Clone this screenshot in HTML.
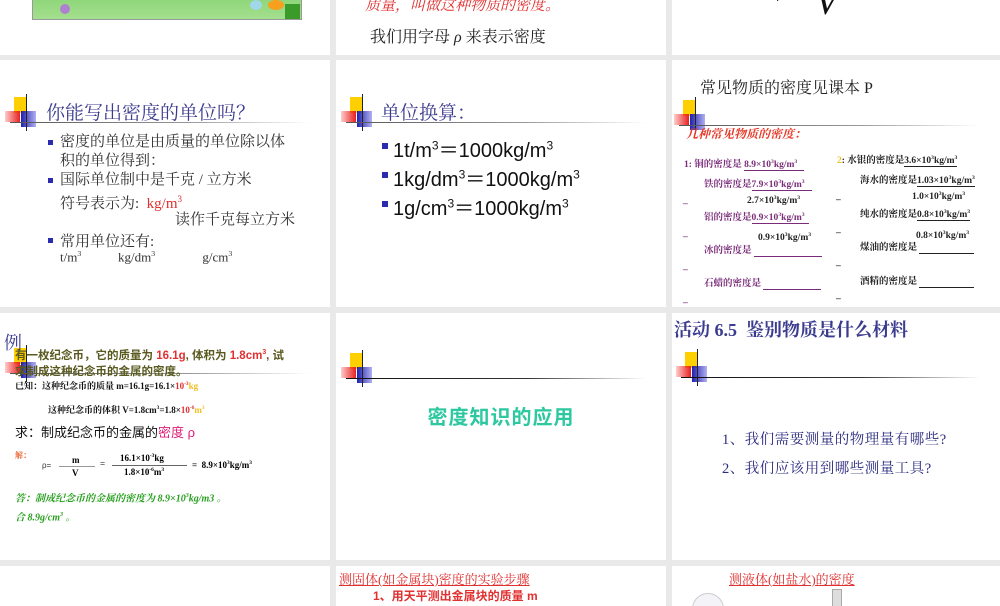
<!DOCTYPE html>
<html><head><meta charset="utf-8"><style>
body{margin:0;width:1000px;height:600px;background:#e9e9e9;position:relative;overflow:hidden;font-family:"Liberation Serif","Noto Serif CJK SC",serif}
.p{position:absolute;background:#fff;overflow:hidden}
.a{position:absolute;white-space:nowrap}
.ic{position:absolute;width:320px;height:40px}
.ic i{position:absolute;display:block}
.y{left:9px;top:0;width:12px;height:16px;background:#ffd000}
.r{left:0;top:14px;width:15px;height:11px;background:linear-gradient(90deg,rgba(255,90,90,.3),#e82020)}
.b{left:16px;top:14px;width:15px;height:16px;background:linear-gradient(90deg,#2020b0,rgba(60,60,220,.4))}
.v{left:21px;top:-3px;width:1px;height:37px;background:#222}
.h{left:5px;top:25px;width:300px;height:1px;background:linear-gradient(90deg,#555,#999 60%,rgba(200,200,200,0))}
.hd .h{background:linear-gradient(90deg,#111,#333 60%,rgba(200,200,200,0))}
.s{font-family:"Liberation Sans","Noto Sans CJK SC",sans-serif}
.pu{color:#7a2c7a;font-weight:bold;font-size:9.5px}
.bl{position:absolute;width:5px;height:5px;background:#2b2bb0}
sup{font-size:60%}
</style></head><body>
<!-- row1 -->
<div class="p" style="left:0;top:0;width:330px;height:55px">
<div class="a" style="left:32px;top:0;width:268px;height:19px;background:linear-gradient(180deg,#8fd67a,#a4df8e);border:1px solid #999;border-top:none"></div>
<div class="a" style="left:60px;top:4px;width:10px;height:10px;border-radius:50%;background:#b080d0"></div>
<div class="a" style="left:250px;top:0;width:12px;height:10px;border-radius:50%;background:#9fd8e8"></div>
<div class="a" style="left:268px;top:0;width:16px;height:10px;border-radius:50%;background:#f7a020"></div>
<div class="a" style="left:285px;top:4px;width:15px;height:15px;background:#3a9a2a"></div>
</div>
<div class="p" style="left:336px;top:0;width:330px;height:55px">
<div class="a" style="left:29px;top:-6px;font-size:15px;color:#e03030;font-style:italic">质量，叫做这种物质的密度。</div>
<div class="a" style="left:34px;top:24px;font-size:16px;color:#222">我们用字母 <i>ρ</i> 来表示密度</div>
</div>
<div class="p" style="left:672px;top:0;width:328px;height:55px">
<div class="a" style="left:143px;top:-20px;font-size:38px;font-style:italic;color:#111">V</div>
<div class="a" style="left:104px;top:-4px;font-size:10px">·</div>
</div>
<!-- row2 col1 -->
<div class="p" style="left:0;top:60px;width:330px;height:247px">
<div class="ic" style="left:5px;top:37px"><i class="y"></i><i class="r"></i><i class="b"></i><i class="v"></i><i class="h"></i></div>
<div class="a" style="left:46px;top:38px;font-size:19px;color:#3b3b8f">你能写出密度的单位吗？</div>
<div class="bl" style="left:48px;top:80px"></div>
<div class="a" style="left:60px;top:73px;font-size:15px;color:#333;line-height:19px">密度的单位是由质量的单位除以体<br>积的单位得到：</div>
<div class="bl" style="left:48px;top:118px"></div>
<div class="a" style="left:60px;top:111px;font-size:15px;color:#333;line-height:19px">国际单位制中是千克 / 立方米<br>符号表示为:&nbsp; <span style="color:#e03030">kg/m<sup>3</sup></span></div>
<div class="a" style="left:175px;top:148px;font-size:15px;color:#333">读作千克每立方米</div>
<div class="bl" style="left:48px;top:178px"></div>
<div class="a" style="left:60px;top:170px;font-size:15px;color:#333">常用单位还有:</div>
<div class="a" style="left:60px;top:189px;font-size:13px;color:#333;word-spacing:2px">t/m<sup>3</sup>&nbsp;&nbsp;&nbsp;&nbsp;&nbsp;&nbsp; kg/dm<sup>3</sup>&nbsp;&nbsp;&nbsp;&nbsp;&nbsp;&nbsp;&nbsp;&nbsp; g/cm<sup>3</sup></div>
</div>
<!-- row2 col2 -->
<div class="p" style="left:336px;top:60px;width:330px;height:247px">
<div class="ic" style="left:5px;top:37px"><i class="y"></i><i class="r"></i><i class="b"></i><i class="v"></i><i class="h"></i></div>
<div class="a" style="left:45px;top:38px;font-size:19px;color:#3b3b8f">单位换算：</div>
<div class="bl" style="left:46px;top:83px;width:6px;height:6px"></div>
<div class="a s" style="left:57px;top:74px;font-size:20px;color:#111">1t/m<sup>3</sup>＝1000kg/m<sup>3</sup></div>
<div class="bl" style="left:46px;top:112px;width:6px;height:6px"></div>
<div class="a s" style="left:57px;top:103px;font-size:20px;color:#111">1kg/dm<sup>3</sup>＝1000kg/m<sup>3</sup></div>
<div class="bl" style="left:46px;top:141px;width:6px;height:6px"></div>
<div class="a s" style="left:57px;top:132px;font-size:20px;color:#111">1g/cm<sup>3</sup>＝1000kg/m<sup>3</sup></div>
</div>
<!-- row2 col3 -->
<div class="p" style="left:672px;top:60px;width:328px;height:247px">
<div class="a" style="left:28px;top:15px;font-size:16px;color:#222">常见物质的密度见课本 P</div>
<div class="ic" style="left:2px;top:40px"><i class="y"></i><i class="r"></i><i class="b"></i><i class="v"></i><i class="h"></i></div>
<div class="a" style="left:14px;top:65px;font-size:12px;color:#e83a2a;font-style:italic;font-weight:bold">几种常见物质的密度：</div>
<div class="a pu" style="left:12px;top:96px">1: 铜的密度是 <span style="border-bottom:1px solid #7a2c7a">8.9×10<sup>3</sup>kg/m<sup>3</sup>&nbsp;&nbsp;&nbsp;</span></div>
<div class="a pu" style="left:32px;top:116px">铁的密度是<span style="border-bottom:1px solid #7a2c7a">7.9×10<sup>3</sup>kg/m<sup>3</sup>&nbsp;&nbsp;&nbsp;</span></div>
<div class="a pu" style="left:75px;top:135px;color:#222">2.7×10<sup>3</sup>kg/m<sup>3</sup></div>
<div class="a pu" style="left:32px;top:149px">铝的密度是<span style="border-bottom:1px solid #7a2c7a">0.9×10<sup>3</sup>kg/m<sup>3</sup>&nbsp;&nbsp;</span></div>
<div class="a pu" style="left:86px;top:172px;color:#222">0.9×10<sup>3</sup>kg/m<sup>3</sup></div>
<div class="a pu" style="left:32px;top:182px">冰的密度是 <span style="border-bottom:1px solid #7a2c7a;display:inline-block;width:68px">&nbsp;</span></div>
<div class="a pu" style="left:32px;top:215px">石蜡的密度是 <span style="border-bottom:1px solid #7a2c7a;display:inline-block;width:58px">&nbsp;</span></div>
<div class="a pu" style="left:165px;top:92px;color:#222"><span style="color:#e8c020">2</span>: 水银的密度是<span style="border-bottom:1px solid #222">3.6×10<sup>3</sup>kg/m<sup>3</sup></span></div>
<div class="a pu" style="left:188px;top:112px;color:#222">海水的密度是<span style="border-bottom:1px solid #222">1.03×10<sup>3</sup>kg/m<sup>3</sup></span></div>
<div class="a pu" style="left:240px;top:131px;color:#222">1.0×10<sup>3</sup>kg/m<sup>3</sup></div>
<div class="a pu" style="left:188px;top:146px;color:#222">纯水的密度是<span style="border-bottom:1px solid #222">0.8×10<sup>3</sup>kg/m<sup>3</sup></span></div>
<div class="a pu" style="left:244px;top:170px;color:#222">0.8×10<sup>3</sup>kg/m<sup>3</sup></div>
<div class="a pu" style="left:188px;top:179px;color:#222">煤油的密度是 <span style="border-bottom:1px solid #222;display:inline-block;width:55px">&nbsp;</span></div>
<div class="a pu" style="left:188px;top:213px;color:#222">酒精的密度是 <span style="border-bottom:1px solid #222;display:inline-block;width:55px">&nbsp;</span></div>
<div class="a pu" style="left:11px;top:136px">_</div><div class="a pu" style="left:11px;top:169px">_</div><div class="a pu" style="left:11px;top:202px">_</div><div class="a pu" style="left:11px;top:235px">_</div>
<div class="a pu" style="left:164px;top:132px;color:#222">_</div><div class="a pu" style="left:164px;top:165px;color:#222">_</div><div class="a pu" style="left:164px;top:198px;color:#222">_</div><div class="a pu" style="left:164px;top:231px;color:#222">_</div>
</div>
<!-- row3 col1 -->
<div class="p" style="left:0;top:313px;width:330px;height:247px">
<div class="ic" style="left:5px;top:35px"><i class="y"></i><i class="r"></i><i class="b"></i><i class="v"></i><i class="h"></i></div>
<div class="a" style="left:4px;top:16px;font-size:18px;color:#3b3b8f">例</div>
<div class="a s" style="left:15px;top:32px;font-size:11.5px;color:#5a5a20;font-weight:bold;line-height:16px">有一枚纪念币，它的质量为 <span style="color:#e03030">16.1g</span>, 体积为 <span style="color:#e03030">1.8cm<sup>3</sup></span>, 试<br>求制成这种纪念币的金属的密度。</div>
<div class="a" style="left:15px;top:66px;font-size:9px;font-weight:bold;color:#111">已知：这种纪念币的质量 m=16.1g=16.1×<span style="color:#e03030">10<sup>-3</sup></span><span style="color:#f0c020">kg</span></div>
<div class="a" style="left:48px;top:90px;font-size:9px;font-weight:bold;color:#111">这种纪念币的体积 V=1.8cm<sup>3</sup>=1.8×<span style="color:#e03030">10<sup>-6</sup></span><span style="color:#f0c020">m<sup>3</sup></span></div>
<div class="a s" style="left:15px;top:109px;font-size:13px;color:#111">求：制成纪念币的金属的<span style="color:#e0207a">密度 ρ</span></div>
<div class="a" style="left:15px;top:137px;font-size:8px;font-weight:bold;color:#e8602a">解：</div>
<div class="a s" style="left:42px;top:148px;font-size:8px;color:#333">ρ=</div>
<div class="a" style="left:72px;top:142px;font-size:9px;font-weight:bold">m</div>
<div class="a" style="left:59px;top:153px;width:36px;height:1px;background:#999"></div>
<div class="a" style="left:72px;top:155px;font-size:9px;font-weight:bold">V</div>
<div class="a" style="left:100px;top:146px;font-size:9px">=</div>
<div class="a" style="left:120px;top:140px;font-size:9px;font-weight:bold">16.1×10<sup>-3</sup>kg</div>
<div class="a" style="left:112px;top:152px;width:75px;height:1px;background:#666"></div>
<div class="a" style="left:124px;top:154px;font-size:9px;font-weight:bold">1.8×10<sup>-6</sup>m<sup>3</sup></div>
<div class="a" style="left:192px;top:147px;font-size:9px;font-weight:bold">=&nbsp; 8.9×10<sup>3</sup>kg/m<sup>3</sup></div>
<div class="a" style="left:15px;top:175px;font-size:10px;font-weight:bold;font-style:italic;color:#2aa020;line-height:17px">答：制成纪念币的金属的密度为 8.9×10<sup>3</sup>kg/m3 。<br>合 8.9g/cm<sup>3</sup> 。</div>
</div>
<!-- row3 col2 -->
<div class="p" style="left:336px;top:313px;width:330px;height:247px">
<div class="ic hd" style="left:5px;top:40px"><i class="y"></i><i class="r"></i><i class="b"></i><i class="v"></i><i class="h"></i></div>
<div class="a s" style="left:0;width:330px;text-align:center;top:88px;font-size:20px;font-weight:bold;color:#2cc8a0;letter-spacing:1px">密度知识的应用</div>
</div>
<!-- row3 col3 -->
<div class="p" style="left:672px;top:313px;width:328px;height:247px">
<div class="a" style="left:2px;top:3px;font-size:18px;font-weight:bold;color:#3b3b8f">活动 6.5&nbsp; 鉴别物质是什么材料</div>
<div class="ic hd" style="left:4px;top:39px"><i class="y"></i><i class="r"></i><i class="b"></i><i class="v"></i><i class="h"></i></div>
<div class="a" style="left:50px;top:115px;font-size:14.5px;color:#2b2b80;letter-spacing:.5px">1、我们需要测量的物理量有哪些?</div>
<div class="a" style="left:50px;top:144px;font-size:14.5px;color:#2b2b80;letter-spacing:.5px">2、我们应该用到哪些测量工具?</div>
</div>
<!-- row4 -->
<div class="p" style="left:0;top:566px;width:330px;height:40px"></div>
<div class="p" style="left:336px;top:566px;width:330px;height:40px">
<div class="a" style="left:3px;top:3px;font-size:13px;color:#e03030;text-decoration:underline">测固体(如金属块)密度的实验步骤</div>
<div class="a s" style="left:37px;top:21px;font-size:12px;font-weight:bold;color:#e03030">1、用天平测出金属块的质量 m</div>
</div>
<div class="p" style="left:672px;top:566px;width:328px;height:40px">
<div class="a" style="left:57px;top:3px;font-size:13px;color:#e03030;text-decoration:underline">测液体(如盐水)的密度</div>
<div class="a" style="left:20px;top:27px;width:30px;height:30px;border-radius:50%;border:1px solid #ccc;background:#f4f4f8"></div>
<div class="a" style="left:160px;top:23px;width:8px;height:20px;background:#ddd;border:1px solid #aaa"></div>
</div>
</body></html>
